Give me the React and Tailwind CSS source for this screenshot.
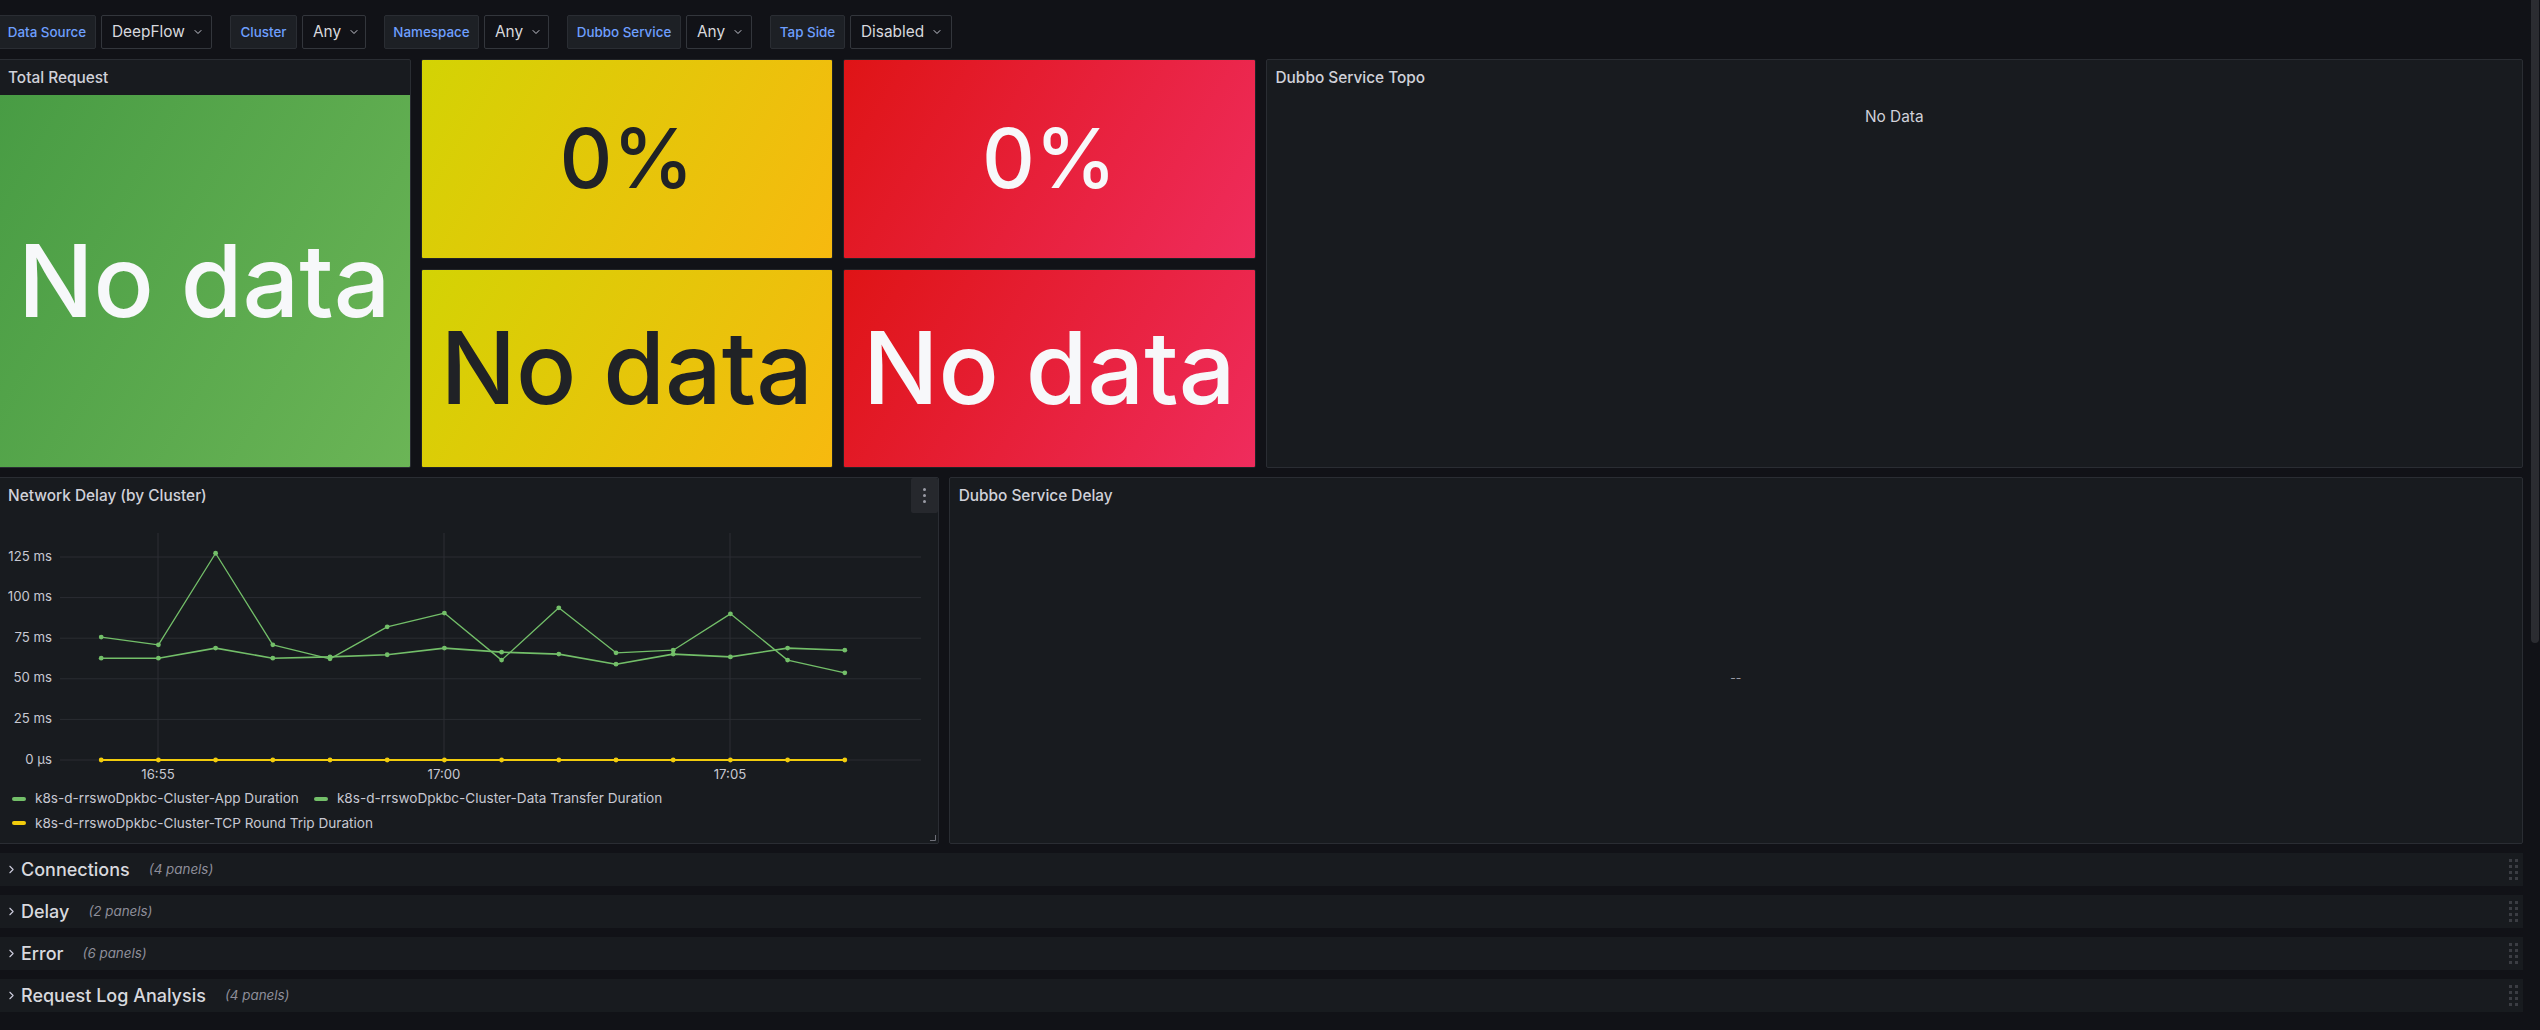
import React from "react";
import { ChevronDown, ChevronRight } from "lucide-react";

const xs = Array.from({ length: 14 }, (_, i) => 102.2 + 57.2 * i);
const yv = (v) => 247 - v * 1.624;
const seriesA = [75.7, 70.9, 127.3, 70.9, 62.3, 82, 90.5, 61.5, 93.7, 66, 67.6, 90, 61.5, 53.7];
const seriesB = [62.7, 62.7, 68.9, 62.7, 63.5, 64.8, 68.9, 66.4, 65.2, 59, 65.2, 63.5, 68.9, 67.6];
const seriesC = Array(14).fill(0);

function Series({ data, color, width = 1.4 }) {
  const pts = data.map((v, i) => `${xs[i]},${yv(v)}`).join(" ");
  return (
    <g>
      <polyline points={pts} fill="none" stroke={color} strokeWidth={width} strokeLinejoin="round" />
      {data.map((v, i) => (
        <circle key={i} cx={xs[i]} cy={yv(v)} r="2.4" fill={color} />
      ))}
    </g>
  );
}

function Chart() {
  const yTicks = [
    [125, "125 ms"],
    [100, "100 ms"],
    [75, "75 ms"],
    [50, "50 ms"],
    [25, "25 ms"],
    [0, "0 µs"],
  ];
  const xTicks = [
    [159, "16:55"],
    [445, "17:00"],
    [731, "17:05"],
  ];
  return (
    <svg width="938" height="273" className="block" style={{ fontFamily: "Inter, sans-serif" }}>
      {yTicks.map(([v, l]) => (
        <g key={l}>
          <line x1="61" x2="922" y1={yv(v)} y2={yv(v)} stroke="#2a2d32" strokeWidth="1" />
          <text x="53" y={yv(v)} textAnchor="end" dominantBaseline="middle" fill="#c7c8d2" fontSize="13.2">
            {l}
          </text>
        </g>
      ))}
      {xTicks.map(([x, l]) => (
        <g key={l}>
          <line x1={x} x2={x} y1="20" y2="250" stroke="#2c2f34" strokeWidth="1" />
          <text x={x} y="262" textAnchor="middle" dominantBaseline="middle" fill="#c7c8d2" fontSize="13.2">
            {l}
          </text>
        </g>
      ))}
      <Series data={seriesA} color="#73bf69" width={1.3} />
      <Series data={seriesB} color="#73bf69" width={1.6} />
      <Series data={seriesC} color="#f2cc0c" width={1.8} />
    </svg>
  );
}

function Label({ children, w }) {
  return (
    <div className={`h-[34px] ${w} flex items-center justify-center bg-[#1d2025] border border-[#2a2d33] rounded-[2px] text-[13.4px] font-medium text-[#6e9fff]`}>
      {children}
    </div>
  );
}

function Select({ children, w }) {
  return (
    <div className={`h-[34px] ${w} flex items-center pl-[10px] gap-[7px] bg-[#111217] border border-[#33363c] rounded-[2px] text-[15.4px] text-[#d8d9de]`}>
      <span>{children}</span>
      <ChevronDown size={12} strokeWidth={2} color="#c7c8d2" />
    </div>
  );
}

function Group({ label, value, lw, sw }) {
  return (
    <div className="flex items-center gap-[5px]">
      <Label w={lw}>{label}</Label>
      <Select w={sw}>{value}</Select>
    </div>
  );
}

function PanelTitle({ children }) {
  return (
    <div className="h-[35px] shrink-0 flex items-center pl-[9px] text-[15.4px] font-medium text-[#d0d1d9]">
      {children}
    </div>
  );
}

function Tile({ grad, text, size, color }) {
  return (
    <div className="flex-1 rounded-[2px] border border-[#202226] overflow-hidden">
      <div className={`w-full h-full flex items-center justify-center ${grad}`}>
        <span className={`leading-none font-medium ${size} ${color}`}>{text}</span>
      </div>
    </div>
  );
}

function DragHandle() {
  return (
    <div className="grid grid-cols-2 gap-x-[3px] gap-y-[3px]">
      {Array.from({ length: 8 }).map((_, i) => (
        <span key={i} className="w-[3px] h-[3px] bg-[#3b3d43]" />
      ))}
    </div>
  );
}

function RowHeader({ title, count }) {
  return (
    <div className="mt-[9px] h-[33px] bg-[#181b1f] flex items-center pl-[7px] pr-[5px]">
      <ChevronRight size={13} strokeWidth={2} color="#ccccdc" />
      <span className="ml-[3px] text-[18px] font-medium text-[#d8d9de]">{title}</span>
      <span className="ml-[19px] text-[13.4px] italic text-[#8e8e9a]">{count}</span>
      <div className="flex-1" />
      <DragHandle />
    </div>
  );
}

export default function App() {
  return (
    <div className="w-[2540px] h-[1030px] bg-[#111217] flex overflow-hidden font-['Inter','Noto_Sans',sans-serif]">
      <div className="flex-1 ml-[-2px] mr-[8px] flex flex-col pt-[15px] min-w-0">
        {/* Toolbar */}
        <div className="h-[34px] flex items-center gap-[18px]">
          <Group label="Data Source" value="DeepFlow" lw="w-[98px]" sw="w-[111px]" />
          <Group label="Cluster" value="Any" lw="w-[67px]" sw="w-[64px]" />
          <Group label="Namespace" value="Any" lw="w-[95px]" sw="w-[65px]" />
          <Group label="Dubbo Service" value="Any" lw="w-[114px]" sw="w-[66px]" />
          <Group label="Tap Side" value="Disabled" lw="w-[75px]" sw="w-[102px]" />
        </div>

        {/* Row 1 */}
        <div className="mt-[10px] h-[409px] grid grid-cols-[repeat(24,minmax(0,1fr))] gap-x-[10px]">
          <div className="col-span-4 flex flex-col bg-[#181b1f] border border-[#2a2d33] rounded-[2px] overflow-hidden">
            <PanelTitle>Total Request</PanelTitle>
            <div className="flex-1 flex items-center justify-center bg-[linear-gradient(120deg,#489c44,#6bb556)]">
              <span className="leading-none font-medium text-[100px] text-[#f7f8fa]">No data</span>
            </div>
          </div>
          <div className="col-span-4 flex flex-col gap-[10px]">
            <Tile grad="bg-[linear-gradient(120deg,#d3d304,#f7b90f)]" text="0%" size="text-[82px]" color="text-[#202226]" />
            <Tile grad="bg-[linear-gradient(120deg,#d3d304,#f7b90f)]" text="No data" size="text-[100px]" color="text-[#202226]" />
          </div>
          <div className="col-span-4 flex flex-col gap-[10px]">
            <Tile grad="bg-[linear-gradient(120deg,#df1416,#ef2c5d)]" text="0%" size="text-[82px]" color="text-[#f7f8fa]" />
            <Tile grad="bg-[linear-gradient(120deg,#df1416,#ef2c5d)]" text="No data" size="text-[100px]" color="text-[#f7f8fa]" />
          </div>
          <div className="col-span-12 flex flex-col bg-[#181b1f] border border-[#2a2d33] rounded-[2px]">
            <PanelTitle>Dubbo Service Topo</PanelTitle>
            <div className="pt-[10px] text-center text-[15.4px] text-[#d0d1d9]">No Data</div>
          </div>
        </div>

        {/* Row 2 */}
        <div className="mt-[9px] h-[367px] grid grid-cols-[repeat(24,minmax(0,1fr))] gap-x-[10px]">
          <div className="col-span-9 relative flex flex-col bg-[#181b1f] border border-[#2a2d33] rounded-[2px]">
            <PanelTitle>Network Delay (by Cluster)</PanelTitle>
            <div className="absolute top-0 right-0 w-[27px] h-[35px] bg-[#26282d] rounded-[2px] flex flex-col items-center justify-center gap-[3px]">
              <span className="w-[3px] h-[3px] rounded-full bg-[#9a9ba5]" />
              <span className="w-[3px] h-[3px] rounded-full bg-[#9a9ba5]" />
              <span className="w-[3px] h-[3px] rounded-full bg-[#9a9ba5]" />
            </div>
            <Chart />
            <div className="flex flex-col pl-[13px] text-[13.6px] text-[#c7c8d2]">
              <div className="h-[25px] flex items-center">
                <span className="w-[14px] h-[4px] rounded-[2px] bg-[#73bf69]" />
                <span className="ml-[9px]">k8s-d-rrswoDpkbc-Cluster-App Duration</span>
                <span className="ml-[15px] w-[14px] h-[4px] rounded-[2px] bg-[#73bf69]" />
                <span className="ml-[9px]">k8s-d-rrswoDpkbc-Cluster-Data Transfer Duration</span>
              </div>
              <div className="h-[24px] flex items-center">
                <span className="w-[14px] h-[4px] rounded-[2px] bg-[#f2cc0c]" />
                <span className="ml-[9px]">k8s-d-rrswoDpkbc-Cluster-TCP Round Trip Duration</span>
              </div>
            </div>
            <svg width="6" height="6" className="absolute right-[2px] bottom-[2px]">
              <path d="M5.5 0 V5.5 H0" fill="none" stroke="#6e6f78" strokeWidth="1" />
            </svg>
          </div>
          <div className="col-span-15 flex flex-col bg-[#181b1f] border border-[#2a2d33] rounded-[2px]">
            <PanelTitle>Dubbo Service Delay</PanelTitle>
            <div className="flex-1 flex items-center justify-center text-[12px] text-[#9a9ba5]">--</div>
          </div>
        </div>

        {/* Collapsed rows */}
        <RowHeader title="Connections" count="(4 panels)" />
        <RowHeader title="Delay" count="(2 panels)" />
        <RowHeader title="Error" count="(6 panels)" />
        <RowHeader title="Request Log Analysis" count="(4 panels)" />
      </div>
      <div className="w-[9px] shrink-0">
        <div className="w-[8px] h-[643px] bg-[#2b2c31] rounded-b-[4px]" />
      </div>
    </div>
  );
}
